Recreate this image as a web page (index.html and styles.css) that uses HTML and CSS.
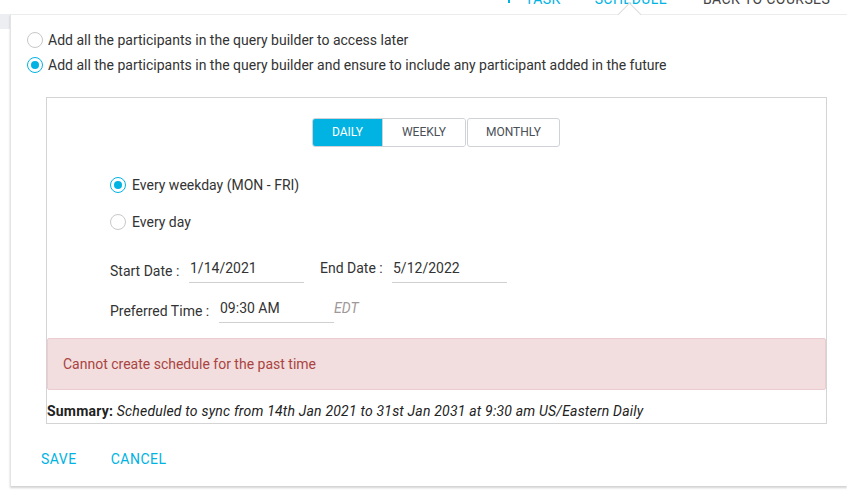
FILE: index.html
```html
<!DOCTYPE html>
<html>
<head>
<meta charset="utf-8">
<link rel="stylesheet" href="styles.css">
</head>
<body>
<div class="page">
  <div class="topnav">
    <span class="nav-sep"></span>
    <span class="nav-item active">TASK</span>
    <span class="nav-item active sched">SCHEDULE</span>
    <span class="nav-item back">BACK TO COURSES</span>
  </div>
  <div class="main">
    <div class="side"><div class="side-band"></div></div>
    <div class="card">
      <span class="caret"></span>
      <label class="opt"><span class="radio"></span><span class="opt-text">Add all the participants in the query builder to access later</span></label>
      <label class="opt"><span class="radio on"></span><span class="opt-text">Add all the participants in the query builder and ensure to include any participant added in the future</span></label>

      <div class="box">
        <div class="tabs">
          <span class="group">
            <span class="tab sel">DAILY</span>
            <span class="tab wk">WEEKLY</span>
          </span>
          <span class="tab mo">MONTHLY</span>
        </div>
        <div class="freq">
          <label class="fopt"><span class="radio on"></span>Every weekday (MON - FRI)</label>
          <label class="fopt"><span class="radio"></span>Every day</label>
        </div>
        <div class="fields">
          <div class="row">
            <span class="lbl l-start">Start Date :</span>
            <span class="inp">1/14/2021</span>
            <span class="lbl l-end">End Date :</span>
            <span class="inp">5/12/2022</span>
          </div>
          <div class="row row2">
            <span class="lbl l-time">Preferred Time :</span>
            <span class="inp">09:30 AM</span>
            <span class="tz">EDT</span>
          </div>
        </div>
        <div class="alert">Cannot create schedule for the past time</div>
        <div class="summary"><b>Summary:</b> <i>Scheduled to sync from 14th Jan 2021 to 31st Jan 2031 at 9:30 am US/Eastern Daily</i></div>
      </div>

      <div class="actions">
        <span class="btn">SAVE</span>
        <span class="btn">CANCEL</span>
      </div>
    </div>
  </div>
</div>
</body>
</html>
```
FILE: styles.css
```css
* { box-sizing: border-box; }
html, body { margin: 0; padding: 0; background: #fff; }
body {
  font-family: Roboto, "Liberation Sans", sans-serif;
  color: #333;
  width: 847px;
  height: 496px;
  overflow: hidden;
}

.topnav {
  height: 14px;
  overflow: hidden;
  display: flex;
  align-items: flex-start;
  padding-left: 508px;
  font-size: 14px;
  line-height: 14px;
  letter-spacing: 0.4px;
}
.topnav .nav-sep { width: 2px; height: 12px; background: #00b3e3; margin-top: -9px; margin-right: 15px; }
.nav-item { margin-top: -8px; white-space: nowrap; }
.nav-item.active { color: #00b3e3; }
.nav-item.sched { margin-left: 34px; }
.nav-item.back { margin-left: 36px; color: #444; }

.main { display: flex; }
.side { width: 10px; flex: none; }
.side-band { height: 15px; background: #eceef1; }

.card {
  position: relative;
  flex: 1;
  height: 472px;
  border-top: 1px solid #ececec;
  border-left: 1px solid #e3e3e3;
  box-shadow: 0 2px 2px rgba(0,0,0,0.18);
  padding: 12px 0 0 16px;
}
.caret {
  position: absolute;
  top: -9px;
  left: 610px;
  width: 17px;
  height: 17px;
  background: #fff;
  border-left: 1px solid #dcdcdc;
  border-top: 1px solid #dcdcdc;
  transform: rotate(45deg);
}

.opt { display: flex; align-items: center; height: 25px; font-size: 14px; color: #333; }
.radio {
  width: 16px; height: 16px; border-radius: 50%;
  border: 1px solid #c8c8c8; background: #fff;
  margin-right: 5px; flex: none; position: relative;
}
.radio.on { border-color: #00b3e3; }
.radio.on::after {
  content: ""; position: absolute; left: 3px; top: 3px;
  width: 8px; height: 8px; border-radius: 50%; background: #00b3e3;
}

.box {
  margin: 20px 0 0 19px;
  width: 781px;
  height: 327px;
  border: 1px solid #d4d4d4;
  padding-top: 20px;
}
.tabs { display: flex; padding-left: 265px; gap: 1px; }
.group { display: flex; border: 1px solid #cfd2d6; border-radius: 3px; overflow: hidden; }
.tab {
  height: 29px; line-height: 27px; font-size: 12px; color: #4a4f58;
  text-align: center; background: #fff;
}
.group .tab { height: 27px; }
.tab.sel { background: #00b3e3; color: #fff; width: 69px; }
.tab.wk { width: 83px; border-left: 1px solid #cfd2d6; }
.tab.mo { width: 93px; border: 1px solid #cfd2d6; border-radius: 3px; }

.freq { padding: 19px 0 0 63px; }
.fopt { display: flex; align-items: center; height: 37px; font-size: 14px; color: #333; }
.fopt .radio { margin-right: 6px; }

.fields { padding: 20px 0 0 63px; font-size: 14px; line-height: 16px; }
.row { display: flex; align-items: flex-start; height: 23px; }
.row2 { margin-top: 17px; }
.lbl { color: #333; margin-top: 3px; flex: none; }
.l-start { width: 79px; }
.l-end { width: 72px; margin-left: 16px; margin-top: 0; }
.l-time { width: 109px; }
.inp { width: 115px; height: 23px; border-bottom: 1px solid #d0d0d0; padding-left: 1px; color: #333; flex: none; }
.tz { font-style: italic; color: #a09898; font-size: 14px; margin-left: 0; }

.alert {
  margin-top: 15px;
  height: 52px;
  background: #f2dede;
  border: 1px solid #ebccd1;
  border-radius: 2px;
  color: #a94442;
  font-size: 14px;
  line-height: 50px;
  padding-left: 15px;
}
.summary {
  margin-top: 13px;
  font-size: 14px;
  line-height: 16px;
  letter-spacing: 0.2px;
  color: #222;
}

.actions { display: flex; gap: 34px; padding: 27px 0 0 14px; line-height: 16px; }
.btn { color: #00b3e3; font-size: 14px; letter-spacing: 0.5px; }
```
